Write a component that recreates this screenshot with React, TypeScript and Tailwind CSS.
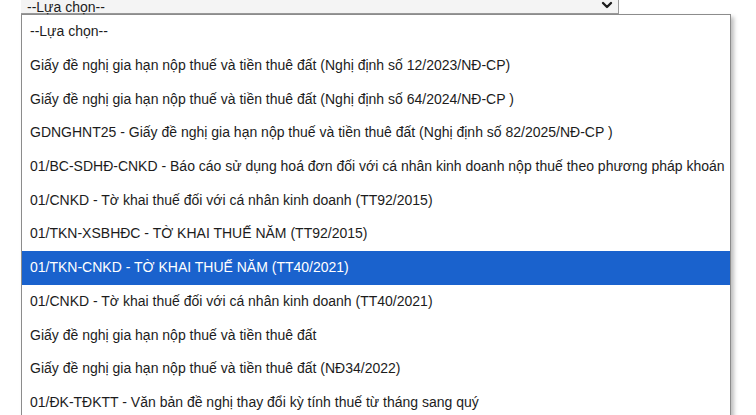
import React from "react";
import { ChevronDown } from "lucide-react";

const options = [
    "--Lựa chọn--",
    "Giấy đề nghị gia hạn nộp thuế và tiền thuê đất (Nghị định số 12/2023/NĐ-CP)",
    "Giấy đề nghị gia hạn nộp thuế và tiền thuê đất (Nghị định số 64/2024/NĐ-CP )",
    "GDNGHNT25 - Giấy đề nghị gia hạn nộp thuế và tiền thuê đất (Nghị định số 82/2025/NĐ-CP )",
    "01/BC-SDHĐ-CNKD - Báo cáo sử dụng hoá đơn đối với cá nhân kinh doanh nộp thuế theo phương pháp khoán",
    "01/CNKD - Tờ khai thuế đối với cá nhân kinh doanh (TT92/2015)",
    "01/TKN-XSBHĐC - TỜ KHAI THUẾ NĂM (TT92/2015)",
    "01/TKN-CNKD - TỜ KHAI THUẾ NĂM (TT40/2021)",
    "01/CNKD - Tờ khai thuế đối với cá nhân kinh doanh (TT40/2021)",
    "Giấy đề nghị gia hạn nộp thuế và tiền thuê đất",
    "Giấy đề nghị gia hạn nộp thuế và tiền thuê đất (NĐ34/2022)",
    "01/ĐK-TĐKTT - Văn bản đề nghị thay đổi kỳ tính thuế từ tháng sang quý",
];

const selected = 7;

export default function App() {
    return (
        <div className="w-[756px] h-[415px] overflow-hidden bg-white font-['Liberation_Sans',Arial,sans-serif] text-[14px] text-[#1c1c1c]">
            <div className="ml-[21px] w-[598px] h-[14px] flex items-center justify-between bg-[#f4f4f4] border-b border-r border-[#9a9a9a]">
                <span className="pl-[6px] leading-none">--Lựa chọn--</span>
                <ChevronDown className="w-4 h-4 mr-[3px] -mt-[3px]" strokeWidth={3.5} />
            </div>
            <div className="ml-[21px] w-[710px] border border-[#8c8c8c] bg-white shadow-[3px_3px_4px_rgba(0,0,0,0.25)]">
                {options.map((opt, i) => (
                    <div
                        key={i}
                        className={
                            i === selected
                                ? "h-[33.7px] flex items-center pl-[8px] bg-[#1a62cd] text-white whitespace-nowrap"
                                : "h-[33.7px] flex items-center pl-[8px] whitespace-nowrap"
                        }>
                        {opt}
                    </div>
                ))}
            </div>
        </div>
    );
}
